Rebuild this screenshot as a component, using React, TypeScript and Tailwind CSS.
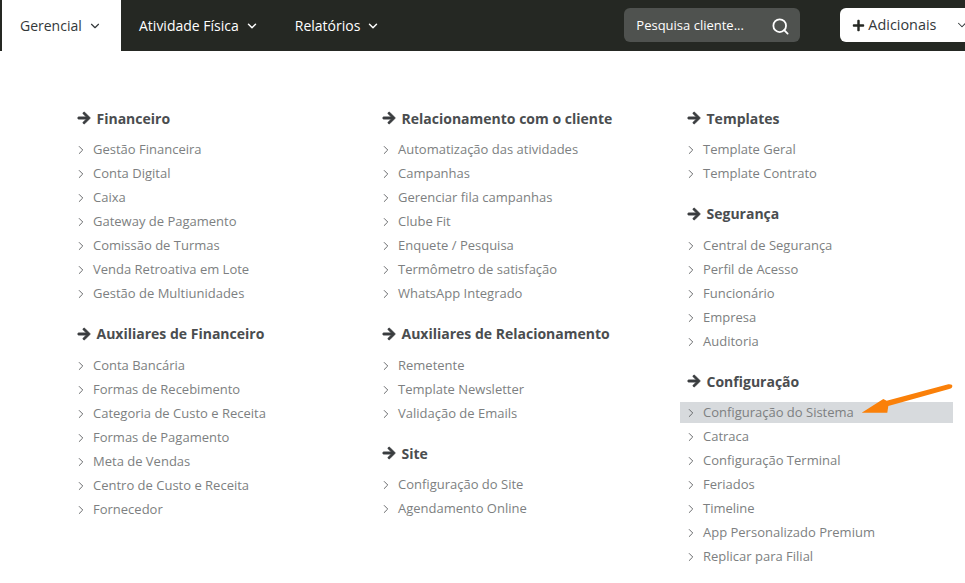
import { ChevronDown, ChevronRight, Search } from "lucide-react";
import { FaArrowRight, FaPlus } from "react-icons/fa";

type Section = { title: string; items: string[]; active?: string };

const columns: Section[][] = [
  [
    { title: "Financeiro", items: ["Gestão Financeira", "Conta Digital", "Caixa", "Gateway de Pagamento", "Comissão de Turmas", "Venda Retroativa em Lote", "Gestão de Multiunidades"] },
    { title: "Auxiliares de Financeiro", items: ["Conta Bancária", "Formas de Recebimento", "Categoria de Custo e Receita", "Formas de Pagamento", "Meta de Vendas", "Centro de Custo e Receita", "Fornecedor"] },
  ],
  [
    { title: "Relacionamento com o cliente", items: ["Automatização das atividades", "Campanhas", "Gerenciar fila campanhas", "Clube Fit", "Enquete / Pesquisa", "Termômetro de satisfação", "WhatsApp Integrado"] },
    { title: "Auxiliares de Relacionamento", items: ["Remetente", "Template Newsletter", "Validação de Emails"] },
    { title: "Site", items: ["Configuração do Site", "Agendamento Online"] },
  ],
  [
    { title: "Templates", items: ["Template Geral", "Template Contrato"] },
    { title: "Segurança", items: ["Central de Segurança", "Perfil de Acesso", "Funcionário", "Empresa", "Auditoria"] },
    { title: "Configuração", active: "Configuração do Sistema", items: ["Configuração do Sistema", "Catraca", "Configuração Terminal", "Feriados", "Timeline", "App Personalizado Premium", "Replicar para Filial"] },
  ],
];

function NavItem({ label, className }: { label: string; className: string }) {
  return (
    <div className={`flex shrink-0 items-center whitespace-nowrap text-[14px] text-white ${className}`}>
      <span>{label}</span>
      <ChevronDown size={14} strokeWidth={2.5} className="ml-[6px] mr-px shrink-0" />
    </div>
  );
}

export default function App() {
  return (
    <div className="relative h-[583px] w-[965px] overflow-hidden bg-white font-['Open_Sans',sans-serif]">
      <header className="flex h-[51px] items-center bg-[#252823] pl-[2px]">
        <div className="flex h-full w-[119px] shrink-0 items-center bg-white pl-[18px] text-[14px] text-[#33383a]">
          <span>Gerencial</span>
          <ChevronDown size={14} strokeWidth={2} className="ml-[6px]" />
        </div>
        <NavItem label="Atividade Física" className="ml-[18px]" />
        <NavItem label="Relatórios" className="ml-[35px]" />
        <div className="mb-px ml-[243px] flex h-[34px] w-[176px] shrink-0 items-center justify-between rounded-[6px] bg-[#4f524f] pl-3 pr-[10px] text-[13px] text-white">
          <span className="whitespace-nowrap pt-px">Pesquisa cliente...</span>
          <Search size={19} strokeWidth={2.25} className="mt-[2px]" />
        </div>
        <div className="mb-px ml-[40px] flex h-[34px] w-[140px] shrink-0 items-center rounded-[6px] bg-white pl-[12px] text-[14.4px] text-[#33383a]">
          <FaPlus size={13} className="mr-[3px] shrink-0 text-[#252823]" />
          <span>Adicionais</span>
          <ChevronDown size={14} strokeWidth={1.75} className="ml-[19px] shrink-0" />
        </div>
      </header>

      <main className="flex pl-[70px] pt-[55.4px]">
        {columns.map((col, i) => (
          <div key={i} className="flex w-[305px] shrink-0 flex-col">
            {col.map((s) => (
              <section key={s.title} className="mb-[15.6px]">
                <h3 className="ml-[7px] mb-[7.8px] flex h-6 items-center text-[14px] font-bold text-[#4a4d4f]">
                  <FaArrowRight size={14} stroke="currentColor" strokeWidth={30} className="mr-[5.5px] shrink-0 text-[#3a3d3f]" />
                  {s.title}
                </h3>
                <ul>
                  {s.items.map((item) => (
                    <li key={item} className="flex h-6 items-center">
                      <div className={`flex w-[273px] items-center pl-[4px] text-[13px] text-[#7d7f81] ${s.active === item ? "h-[21px] bg-[#d7dadd]" : "h-6"}`}>
                        <ChevronRight size={14} strokeWidth={1.6} className="mr-[5px] shrink-0 text-[#5f6163]" />
                        {item}
                      </div>
                    </li>
                  ))}
                </ul>
              </section>
            ))}
          </div>
        ))}
      </main>

      <svg className="absolute left-[855px] top-[380px]" width="105" height="40" viewBox="0 0 105 40">
        <path d="M6.7 32.7 L28.3 19 L31.7 20.7 L93.3 4.3 Q97.8 4 97.3 6.5 Q97 8.5 93.3 9.3 L33.3 26 L32.3 32.7 Z" fill="#fa8009" />
      </svg>
    </div>
  );
}
